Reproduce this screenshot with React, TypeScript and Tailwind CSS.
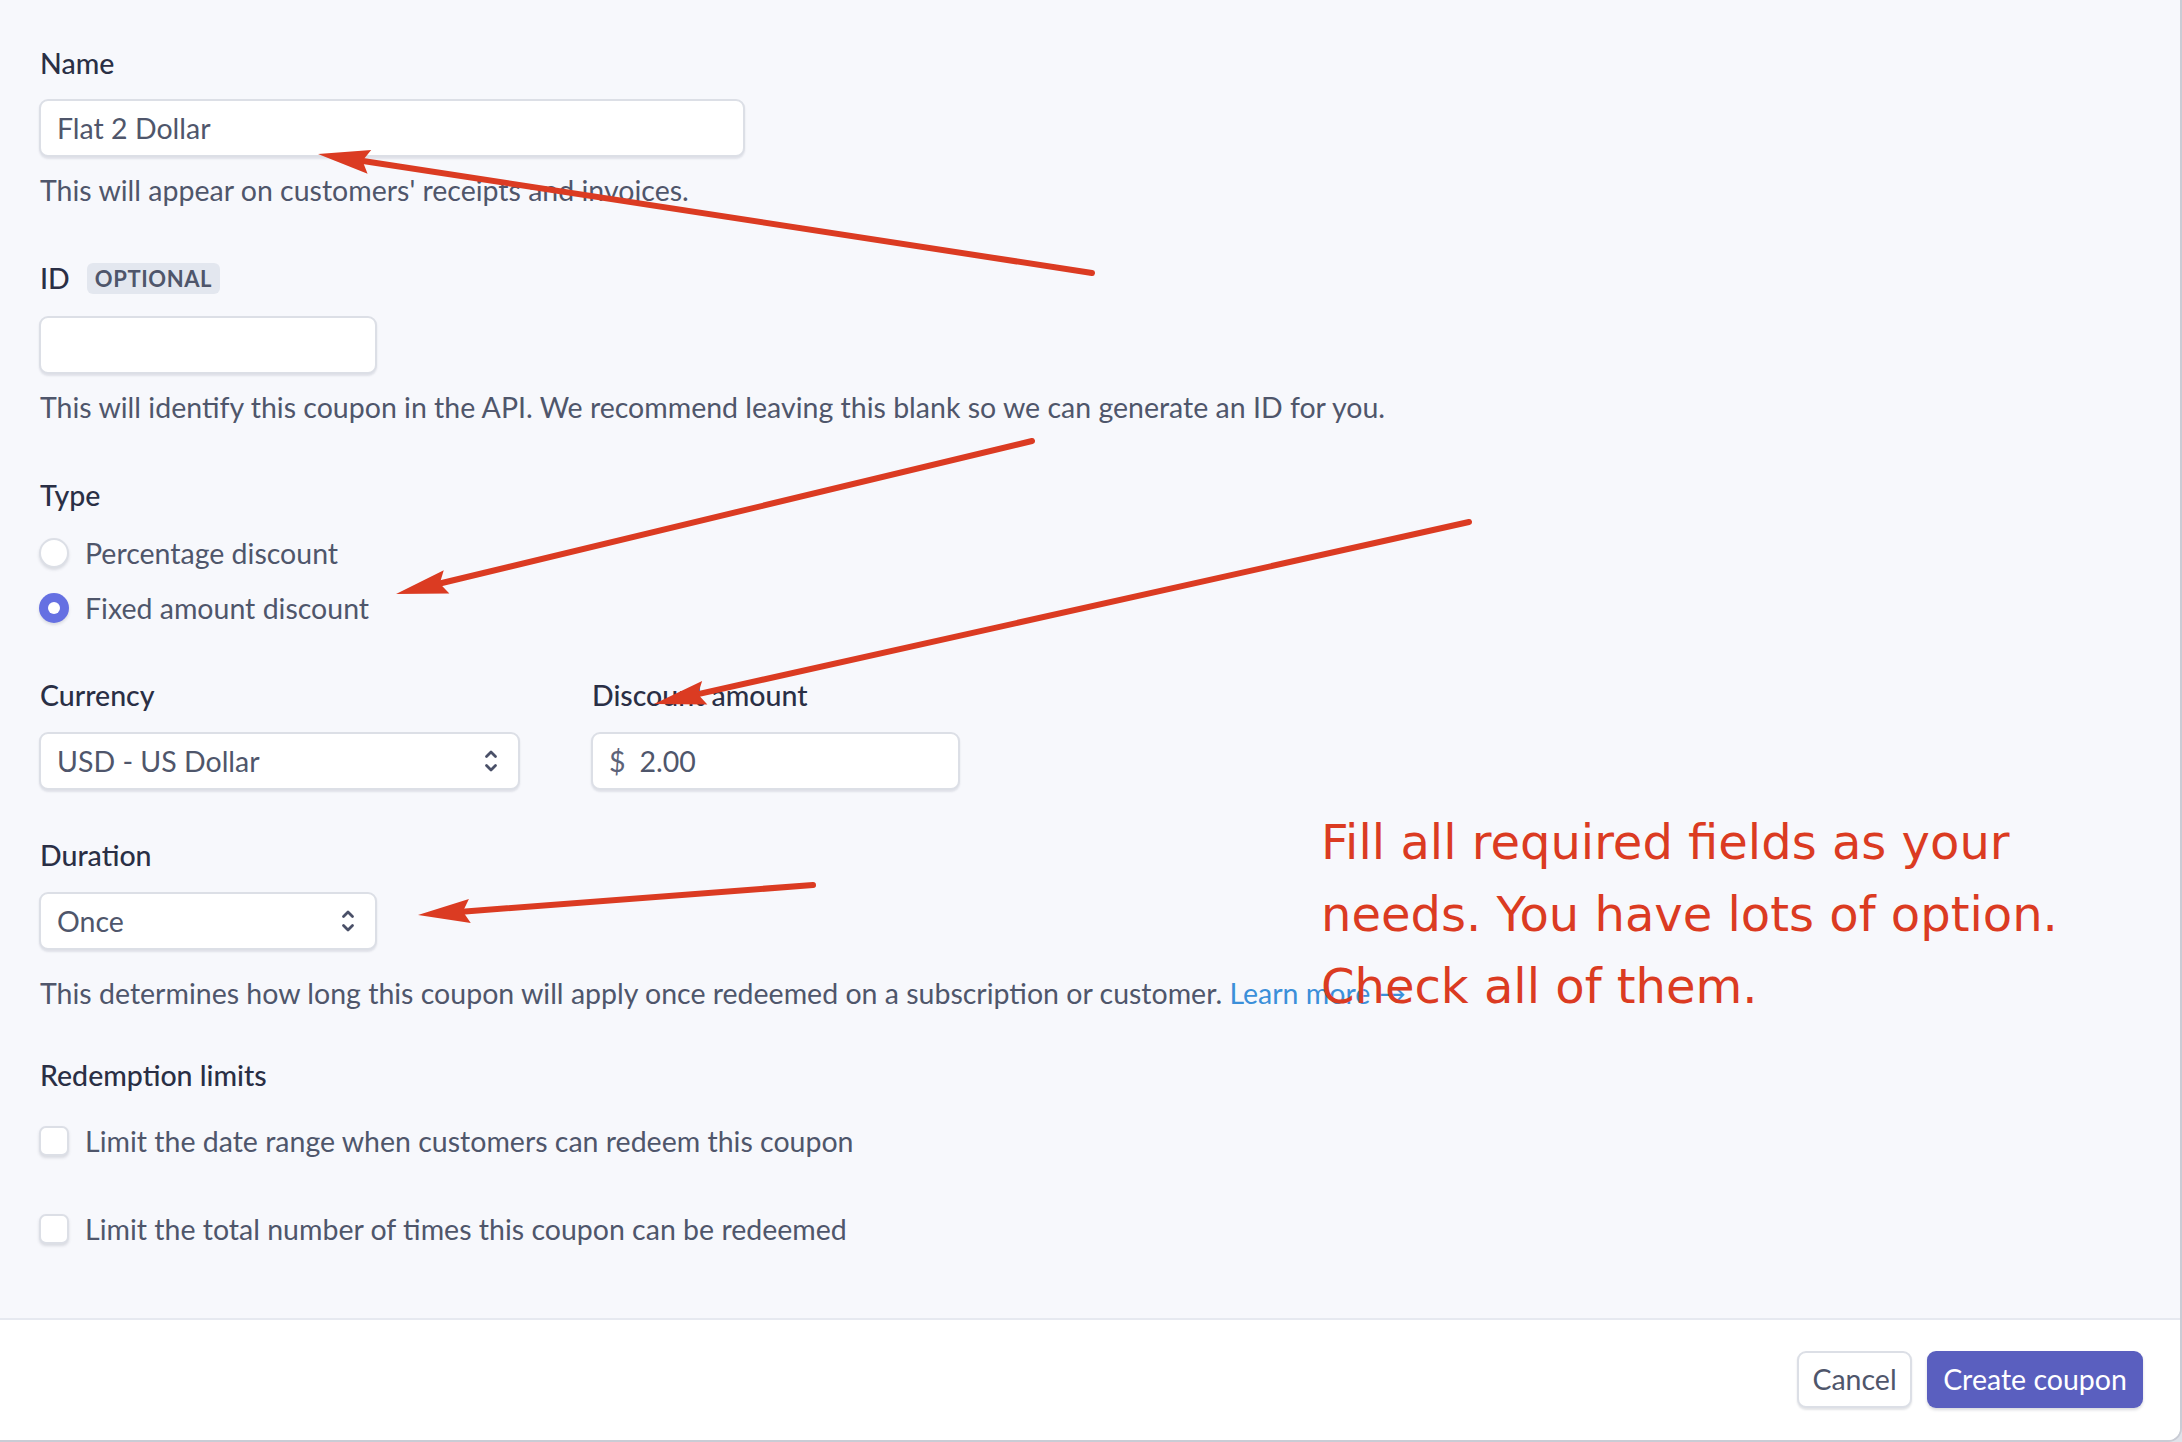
import React from "react";

const UpDown = () => (
  <svg
    viewBox="0 0 14 26"
    className="h-[26px] w-[14px] text-[#4a5068]"
    fill="none"
    stroke="currentColor"
    strokeWidth={2.8}
    strokeLinecap="round"
    strokeLinejoin="round"
  >
    <path d="M2.5 8.5 L7 4 L11.5 8.5" />
    <path d="M2.5 17.5 L7 22 L11.5 17.5" />
  </svg>
);

// annotation arrows drawn over the form: [tailX, tailY, tipX, tipY]
const arrows: [number, number, number, number][] = [
  [1092, 273, 318, 154],
  [1032, 441, 396, 594],
  [1469, 522, 654, 704],
  [813, 885, 418, 915],
];

const Arrow = ({ a }: { a: [number, number, number, number] }) => {
  const [x1, y1, x2, y2] = a;
  const len = Math.hypot(x2 - x1, y2 - y1);
  const dx = (x2 - x1) / len;
  const dy = (y2 - y1) / len;
  const L = 52;
  const W = 12;
  const bx = x2 - dx * L;
  const by = y2 - dy * L;
  const pts = `${x2},${y2} ${bx - dy * W},${by + dx * W} ${bx + dx * 7},${by + dy * 7} ${bx + dy * W},${by - dx * W}`;
  return (
    <g>
      <line x1={x1} y1={y1} x2={bx + dx * 8} y2={by + dy * 8} stroke="#db3b22" strokeWidth={6} strokeLinecap="round" />
      <polygon points={pts} fill="#db3b22" />
    </g>
  );
};

const Label = ({ children }: { children: React.ReactNode }) => (
  <div className="ml-[1px] h-[40px] text-[28.5px] leading-[40px] font-medium text-[#2a2f45]">{children}</div>
);

const Help = ({ children, className = "" }: { children: React.ReactNode; className?: string }) => (
  <div className={`ml-[1px] h-[40px] text-[28.5px] leading-[40px] text-[#4f566b] ${className}`}>{children}</div>
);

const fieldCls =
  "flex h-[58px] items-center rounded-[9px] border-2 border-[#dcdfe6] bg-white px-[16px] text-[28.5px] text-[#4f566b] shadow-[0_2px_2px_rgba(60,66,87,0.12)]";

const boxShadow = "shadow-[0_2px_3px_rgba(60,66,87,0.16)]";

export default function App() {
  return (
    <div className="relative h-[1442px] w-[2182px] bg-[#dfe2e9] font-['Lato',sans-serif]">
      <div className="flex h-[1442px] flex-col overflow-hidden rounded-br-[14px] border-b-2 border-r-2 border-[#c9ccd5] bg-white">
        <div className="h-[1318px] bg-[#f7f8fc] pl-[39px] pt-[43px]">
          <Label>Name</Label>
          <div className={`${fieldCls} mt-[16px] w-[706px]`}>Flat 2 Dollar</div>
          <Help className="mt-[13px]">This will appear on customers' receipts and invoices.</Help>

          <div className="mt-[48px] flex h-[40px] items-center">
            <Label>ID</Label>
            <span className="ml-[17px] flex h-[31px] items-center rounded-[6px] bg-[#e3e7ef] px-[8px] text-[22px] font-bold tracking-[0.6px] text-[#4f566b]">
              OPTIONAL
            </span>
          </div>
          <div className={`${fieldCls} mt-[18px] h-[57px] w-[338px]`} />
          <Help className="mt-[13px]">
            This will identify this coupon in the API. We recommend leaving this blank so we can generate an ID for you.
          </Help>

          <div className="mt-[48px]">
            <Label>Type</Label>
          </div>
          <div className="mt-[18px] flex h-[40px] items-center">
            <span className={`h-[30px] w-[30px] rounded-full border-2 border-[#dcdfe6] bg-white ${boxShadow}`} />
            <span className="ml-[16px] text-[28.5px] text-[#4f566b]">Percentage discount</span>
          </div>
          <div className="mt-[15px] flex h-[40px] items-center">
            <span className={`flex h-[30px] w-[30px] items-center justify-center rounded-full bg-[#6570e2] ${boxShadow}`}>
              <span className="h-[12px] w-[12px] rounded-full bg-white" />
            </span>
            <span className="ml-[16px] text-[28.5px] text-[#4f566b]">Fixed amount discount</span>
          </div>

          <div className="mt-[47px] flex gap-[71px]">
            <div className="w-[481px]">
              <Label>Currency</Label>
              <div className={`${fieldCls} mt-[17px] justify-between pr-[20px]`}>
                <span>USD - US Dollar</span>
                <UpDown />
              </div>
            </div>
            <div className="w-[369px]">
              <Label>Discount amount</Label>
              <div className={`${fieldCls} mt-[17px]`}>
                <span className="text-[#5d6379]">$</span>
                <span className="ml-[14px]">2.00</span>
              </div>
            </div>
          </div>

          <div className="mt-[45px]">
            <Label>Duration</Label>
          </div>
          <div className={`${fieldCls} mt-[17px] w-[338px] justify-between pr-[20px]`}>
            <span>Once</span>
            <UpDown />
          </div>
          <Help className="mt-[23px]">
            This determines how long this coupon will apply once redeemed on a subscription or customer.{" "}
            <span className="text-[#3b8fd9]">Learn more →</span>
          </Help>

          <div className="mt-[42px]">
            <Label>Redemption limits</Label>
          </div>
          <div className="mt-[26px] flex h-[40px] items-center">
            <span className={`h-[30px] w-[30px] rounded-[7px] border-2 border-[#dcdfe6] bg-white ${boxShadow}`} />
            <span className="ml-[16px] text-[28.5px] text-[#4f566b]">Limit the date range when customers can redeem this coupon</span>
          </div>
          <div className="mt-[48px] flex h-[40px] items-center">
            <span className={`h-[30px] w-[30px] rounded-[7px] border-2 border-[#dcdfe6] bg-white ${boxShadow}`} />
            <span className="ml-[16px] text-[28.5px] text-[#4f566b]">Limit the total number of times this coupon can be redeemed</span>
          </div>
        </div>

        <div className="flex flex-1 justify-end gap-[15px] border-t-2 border-[#e6e9f0] bg-white pr-[37px] pt-[31px]">
          <button className="h-[57px] w-[115px] rounded-[9px] border-2 border-[#dcdfe6] bg-white text-[28.5px] text-[#4f566b] shadow-[0_2px_2px_rgba(60,66,87,0.14)]">
            Cancel
          </button>
          <button className="h-[57px] w-[216px] rounded-[9px] bg-[#5a5fbf] text-[28.5px] text-white shadow-[0_2px_3px_rgba(60,66,87,0.2)]">
            Create coupon
          </button>
        </div>
      </div>

      <svg className="pointer-events-none absolute inset-0 h-[1442px] w-[2182px]" viewBox="0 0 2182 1442">
        {arrows.map((a, i) => (
          <Arrow key={i} a={a} />
        ))}
      </svg>

      <div className="pointer-events-none absolute left-[1321px] top-[806px] whitespace-nowrap font-['DejaVu_Sans',sans-serif] text-[48px] leading-[72px] text-[#db3b22]">
        Fill all required fields as your
        <br />
        needs. You have lots of option.
        <br />
        Check all of them.
      </div>
    </div>
  );
}
